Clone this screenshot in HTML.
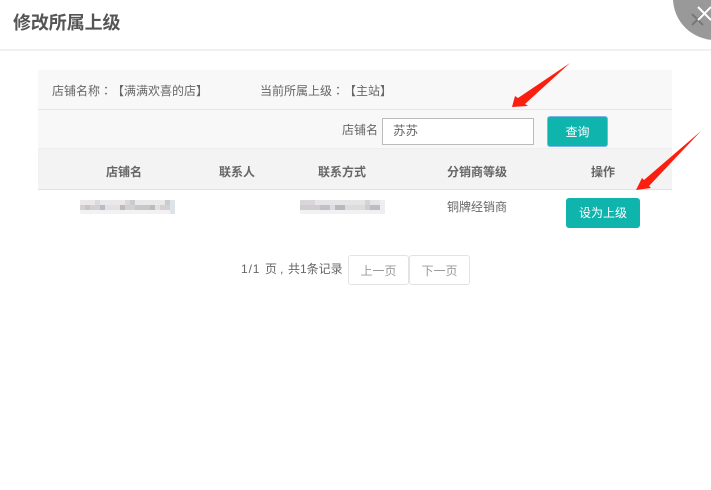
<!DOCTYPE html>
<html lang="zh">
<head>
<meta charset="utf-8">
<title>修改所属上级</title>
<style>
html,body{margin:0;padding:0;background:#fff;}
body{position:relative;width:711px;height:490px;overflow:hidden;font-family:"Liberation Sans","Noto Sans CJK SC",sans-serif;font-size:12px;color:#666;text-spacing-trim:space-all;}
#w{position:absolute;left:0;top:0;width:711px;height:490px;filter:blur(.3px);}
.a{position:absolute;white-space:nowrap;line-height:16px;}
.c{text-align:center;}
.b{position:absolute;box-sizing:border-box;}
.th{font-weight:bold;color:#666;}
.t{font-family:"Noto Sans CJK TC",sans-serif;}
svg{position:absolute;left:0;top:0;}
</style>
</head>
<body>
<div id="w">
<div class="a" style="left:13px;top:10px;font-size:18px;line-height:26px;font-weight:bold;color:#555;letter-spacing:-.1px;">修改所属上级</div>
<div class="b" style="left:0;top:49px;width:711px;height:2px;background:#f0f0f0;"></div>

<div class="b" style="left:38px;top:70px;width:634px;height:79px;background:#f8f8f8;"></div>
<div class="b" style="left:38px;top:109px;width:634px;height:1px;background:#e5e5e5;"></div>
<div class="b" style="left:38px;top:148px;width:634px;height:42px;background:#f3f3f3;border-top:1px solid #eee;border-bottom:1px solid #e2e2e2;"></div>

<div class="a" style="left:52px;top:83px;">店铺名称<span class="t" lang="zh-Hant">：</span>【满满欢喜的店】</div>
<div class="a" style="left:260px;top:83px;">当前所属上级<span class="t" lang="zh-Hant">：</span>【主站】</div>

<div class="a" style="left:342px;top:122px;">店铺名</div>
<div class="b" style="left:382px;top:118px;width:152px;height:27px;background:#fff;border:1px solid #bbb;"></div>
<div class="a" style="left:393px;top:123px;font-size:12.5px;">苏苏</div>
<div class="b" style="left:547px;top:116px;width:61px;height:31px;background:#0fb5ad;border:1px solid #7fb4e8;border-radius:3px;"></div>
<div class="a c" style="left:547px;top:124px;width:61px;color:#fff;">查询</div>

<div class="a c th" style="left:74px;top:164px;width:100px;">店铺名</div>
<div class="a c th" style="left:187px;top:164px;width:100px;">联系人</div>
<div class="a c th" style="left:292px;top:164px;width:100px;">联系方式</div>
<div class="a c th" style="left:427px;top:164px;width:100px;">分销商等级</div>
<div class="a c th" style="left:553px;top:164px;width:100px;">操作</div>

<svg width="711" height="490" viewBox="0 0 711 490">
<g>
<rect x="80" y="200" width="95" height="5" fill="#eae8e8"/>
<rect x="80" y="205" width="95" height="5" fill="#d2d0d2"/>
<rect x="80" y="210" width="95" height="4" fill="#f2f2f3"/>
<rect x="85" y="205" width="5" height="5" fill="#c8c4c6"/>
<rect x="95" y="200" width="5" height="5" fill="#dcdadc"/>
<rect x="100" y="205" width="5" height="5" fill="#b9bbc9"/>
<rect x="105" y="205" width="15" height="5" fill="#e2e2e4"/>
<rect x="120" y="205" width="5" height="5" fill="#c0b8bc"/>
<rect x="125" y="200" width="5" height="5" fill="#dcd8d6"/>
<rect x="130" y="200" width="5" height="5" fill="#c8ccd0"/>
<rect x="135" y="205" width="15" height="5" fill="#c6c8c8"/>
<rect x="150" y="205" width="5" height="5" fill="#bcbcbc"/>
<rect x="155" y="205" width="5" height="5" fill="#e2e2e2"/>
<rect x="165" y="200" width="5" height="5" fill="#c8cccc"/>
<rect x="170" y="200" width="5" height="14" fill="#dde3e6"/>
</g>
<g>
<rect x="300" y="200" width="85" height="5" fill="#e6e5e6"/>
<rect x="300" y="205" width="85" height="5" fill="#cfcdd0"/>
<rect x="300" y="210" width="85" height="4" fill="#f2f1f2"/>
<rect x="300" y="200" width="15" height="5" fill="#d8d6d8"/>
<rect x="320" y="205" width="10" height="5" fill="#bfc0ca"/>
<rect x="330" y="205" width="5" height="5" fill="#dedcdc"/>
<rect x="335" y="205" width="10" height="5" fill="#b8b8bf"/>
<rect x="345" y="205" width="20" height="5" fill="#dcdcde"/>
<rect x="365" y="200" width="5" height="5" fill="#d6d4d2"/>
<rect x="370" y="205" width="10" height="5" fill="#bdbcc4"/>
<rect x="380" y="200" width="5" height="14" fill="#eeeef0"/>
</g>
</svg>

<div class="a" style="left:447px;top:199px;">铜牌经销商</div>
<div class="b" style="left:566px;top:198px;width:74px;height:30px;background:#0fb5ad;border-radius:3px;"></div>
<div class="a c" style="left:566px;top:205px;width:74px;color:#fff;">设为上级</div>

<div class="a" style="left:241px;top:261px;letter-spacing:.9px;">1/1</div>
<div class="a" style="left:265px;top:261px;">页</div>
<div class="a" style="left:280px;top:261px;">,</div>
<div class="a" style="left:288px;top:261px;">共1条记录</div>
<div class="b" style="left:348px;top:255px;width:61px;height:30px;background:#fff;border:1px solid #e3e3e3;border-radius:3px;"></div>
<div class="a c" style="left:348px;top:263px;width:61px;color:#999;">上一页</div>
<div class="b" style="left:409px;top:255px;width:61px;height:30px;background:#fff;border:1px solid #e3e3e3;border-radius:3px;"></div>
<div class="a c" style="left:409px;top:263px;width:61px;color:#999;">下一页</div>

<svg width="711" height="490" viewBox="0 0 711 490">
<path d="M512 107 L515 96 L518 98 L570 63 L525 104 L528 106 Z" fill="#fb1f10"/>
<path d="M636 190 L642 178 L644 180 L701 131 L649 186 L651 188 Z" fill="#fb1f10"/>
<circle cx="715" cy="-2" r="42" fill="#999"/>
<path d="M692 25 L703 14 M692 14 L703 25" stroke="#777" stroke-width="2" fill="none"/>
<path d="M698 7 L711 20 M698 20 L711 7" stroke="#fff" stroke-width="2" fill="none"/>
</svg>
</div>
</body>
</html>
